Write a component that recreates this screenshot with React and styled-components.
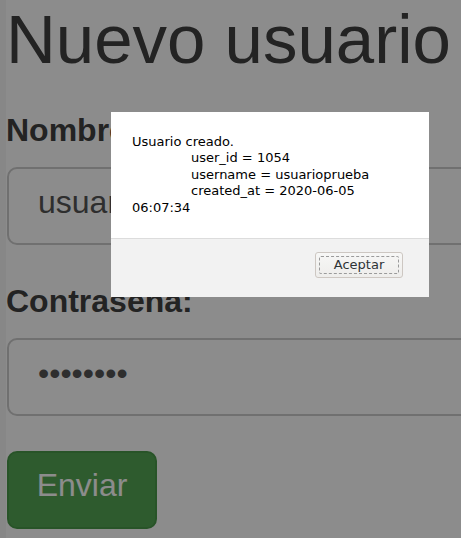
import React from "react";
import styled, { createGlobalStyle } from "styled-components";

const Global = createGlobalStyle`
  html, body {
    margin: 0;
    padding: 0;
    overflow: hidden;
    background: #f6f6f6;
  }
  body {
    font-family: "Liberation Sans", Arial, sans-serif;
  }
`;

const Page = styled.div`
  margin-left: 6px;
  min-height: 100vh;
  background: #ffffff;
  display: flex;
  flex-direction: column;
  align-items: flex-start;
  padding-top: 5px;
  box-sizing: border-box;
`;

const Title = styled.h1`
  margin: 0 0 40px 0;
  font-size: 69px;
  line-height: 69px;
  font-weight: normal;
  color: #404040;
  white-space: nowrap;
`;

const Label = styled.label`
  display: block;
  margin: 0 0 21px 0;
  font-size: 32px;
  line-height: 32px;
  font-weight: bold;
  color: #404040;
  white-space: nowrap;
`;

const Field = styled.input`
  box-sizing: border-box;
  display: block;
  width: 520px;
  height: 78px;
  margin: 0 0 ${(p) => p.$after}px 1px;
  padding: 0 29px 8px 29px;
  border: 2px solid #cccccc;
  border-radius: 10px;
  background: #ffffff;
  color: #555555;
  font-family: "Liberation Sans", Arial, sans-serif;
  font-size: 32px;
  outline: none;
`;

const Submit = styled.button`
  box-sizing: border-box;
  margin-left: 1px;
  width: 150px;
  height: 78px;
  padding: 0 0 9px 0;
  border: 2px solid #4a994a;
  border-radius: 10px;
  background: #55a655;
  color: #ffffff;
  font-family: "Liberation Sans", Arial, sans-serif;
  font-size: 32px;
  cursor: pointer;
`;

const Backdrop = styled.div`
  position: fixed;
  inset: 0;
  background: rgba(0, 0, 0, 0.45);
`;

const Dialog = styled.div`
  position: fixed;
  left: 111px;
  top: 112px;
  width: 318px;
  height: 185px;
  display: flex;
  flex-direction: column;
  background: #ffffff;
  font-family: "DejaVu Sans", sans-serif;
  font-size: 13px;
  color: #000000;
`;

const Message = styled.div`
  height: 127px;
  box-sizing: border-box;
  padding: 22px 21px 0 21px;
  line-height: 16.4px;
  border-bottom: 1px solid #dcdcdc;
`;

const Line = styled.div`
  padding-left: ${(p) => (p.$indent ? 59 : 0)}px;
  white-space: nowrap;
`;

const Footer = styled.div`
  flex: 1;
  display: flex;
  justify-content: flex-end;
  align-items: flex-start;
  padding: 13px 26px 0 0;
  background: #f2f2f2;
`;

const DialogButton = styled.button`
  position: relative;
  box-sizing: border-box;
  width: 88px;
  height: 26px;
  padding: 0 0 1px 0;
  border: 1px solid #cdc7c2;
  border-radius: 3px;
  background: linear-gradient(#f7f7f6, #eeedeb);
  font-family: "DejaVu Sans", sans-serif;
  font-size: 13px;
  color: #2e3436;
  display: flex;
  align-items: center;
  justify-content: center;

  &::after {
    content: "";
    position: absolute;
    inset: 3px;
    border: 1px dashed #9a9a9a;
    border-radius: 2px;
  }
`;

export default function App() {
  return (
    <>
      <Global />
      <Page>
        <Title>Nuevo usuario</Title>
        <Label>Nombre:</Label>
        <Field type="text" defaultValue="usuarioprueba" $after={40} readOnly />
        <Label>Contraseña:</Label>
        <Field type="password" defaultValue="12345678" $after={35} readOnly />
        <Submit>Enviar</Submit>
      </Page>
      <Backdrop />
      <Dialog>
        <Message>
          <Line>Usuario creado.</Line>
          <Line $indent>user_id = 1054</Line>
          <Line $indent>username = usuarioprueba</Line>
          <Line $indent>created_at = 2020-06-05</Line>
          <Line>06:07:34</Line>
        </Message>
        <Footer>
          <DialogButton>Aceptar</DialogButton>
        </Footer>
      </Dialog>
    </>
  );
}
